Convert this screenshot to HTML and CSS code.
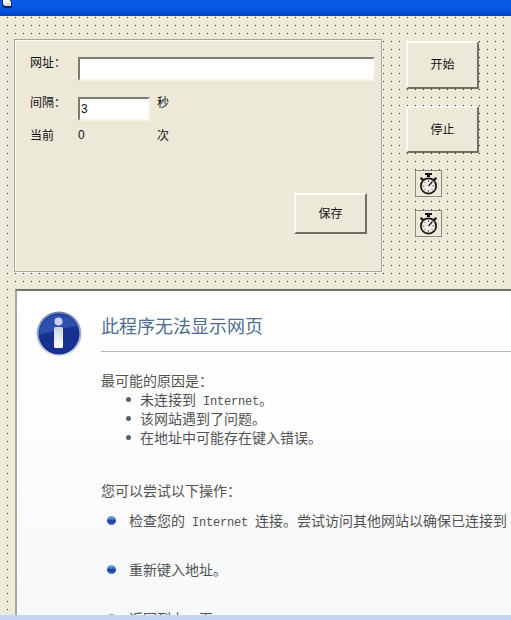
FILE: index.html
```html
<!DOCTYPE html>
<html lang="zh-CN">
<head>
    <meta charset="UTF-8">
    <title>网址刷新</title>
    <link rel="stylesheet" href="styles.css">
</head>
<body>
    <div class="titlebar">
        <svg class="form-icon" width="12" height="8" viewBox="0 0 12 8">
            <path d="M2 0h8l2 2v6H4L2 5z" fill="#14264e"/>
            <path d="M3 0h6.500L11 2v4H5L3 4z" fill="#fff"/>
            <path d="M5 3h6v3H5z" fill="#cfe0f4"/>
        </svg>
    </div>

    <div class="form">
        <div class="top-row">
            <div class="panel">
                <div class="fields">
                    <span class="label">网址：</span>
                    <div class="textbox textbox-url"></div>
                    <span></span>

                    <span class="label">间隔：</span>
                    <div class="textbox textbox-short">3</div>
                    <span class="unit">秒</span>

                    <span class="label last">当前</span>
                    <span class="count last">0</span>
                    <span class="unit last">次</span>
                </div>
                <div class="panel-foot">
                    <button class="btn">保存</button>
                </div>
            </div>

            <div class="side">
                <button class="btn btn-start">开始</button>
                <button class="btn btn-stop">停止</button>
                <div class="timer">
                    <svg width="21" height="22" viewBox="0 0 21 22">
                        <use href="#watch"/>
                    </svg>
                </div>
                <div class="timer">
                    <svg width="21" height="22" viewBox="0 0 21 22">
                        <use href="#watch"/>
                    </svg>
                </div>
            </div>
        </div>

        <div class="browser">
            <div class="error-head">
                <svg class="info-icon" width="46" height="46" viewBox="0 0 46 46">
                    <defs>
                        <linearGradient id="infoRim" x1="0" y1="0" x2="0" y2="1">
                            <stop offset="0" stop-color="#6a7ca8"/>
                            <stop offset="1" stop-color="#dfe4f0"/>
                        </linearGradient>
                        <linearGradient id="infoStem" x1="0" y1="0" x2="0" y2="1">
                            <stop offset="0" stop-color="#c9d2e6"/>
                            <stop offset="1" stop-color="#ffffff"/>
                        </linearGradient>
                    </defs>
                    <circle cx="23" cy="23" r="22.500" fill="url(#infoRim)"/>
                    <circle cx="23" cy="23" r="20.500" fill="#17328e"/>
                    <path d="M3 24a20 20 0 0 1 38-9C30 17 14 21 3 24z" fill="#2c4fb0"/>
                    <circle cx="22.500" cy="10.500" r="4" fill="#c8d2e8"/>
                    <rect x="18" y="16" width="9" height="21" rx="1.500" fill="url(#infoStem)"/>
                </svg>
                <div class="error-title">
                    <h1>此程序无法显示网页</h1>
                </div>
            </div>

            <p class="reason-title">最可能的原因是：</p>
            <ul class="reasons">
                <li>未连接到<span class="latin"> Internet</span>。</li>
                <li>该网站遇到了问题。</li>
                <li>在地址中可能存在键入错误。</li>
            </ul>

            <p class="try-title">您可以尝试以下操作：</p>
            <div class="action action-first"><i class="orb"></i><span>检查您的<span class="latin"> Internet </span>连接。尝试访问其他网站以确保已连接到 Internet。</span></div>
            <div class="action"><i class="orb"></i><span>重新键入地址。</span></div>
            <div class="action"><i class="orb"></i><span>返回到上一页。</span></div>
        </div>
    </div>
    <div class="status-strip"></div>

    <svg class="defs" width="0" height="0">
        <symbol id="watch" viewBox="0 0 21 22">
            <path d="M7 0h7v2h-2v2H9V2H7z" fill="#111"/>
            <path d="M3 4l3 2-1 2-3-2zM18 4l-3 2 1 2 3-2z" fill="#111"/>
            <circle cx="10.500" cy="13" r="8.500" fill="#111"/>
            <circle cx="10.500" cy="13" r="6.800" fill="#f4f2e8"/>
            <path d="M10.500 13l4-4.500" stroke="#111" stroke-width="1.200"/>
            <path d="M10.500 7v2M10.500 17v2M4.500 13h2M14.500 13h2M6.500 9l1 1M6.500 17l1-1M14.500 17l-1-1" stroke="#666" stroke-width="1"/>
        </symbol>
    </svg>
</body>
</html>
```

FILE: styles.css
```css
html, body {
    margin: 0;
    padding: 0;
}

body {
    width: 511px;
    height: 620px;
    overflow: hidden;
    background: #ece9d8;
    font-family: "Noto Sans CJK SC", "Liberation Sans", sans-serif;
    font-size: 12px;
    color: #111;
}

.defs {
    position: absolute;
}

.titlebar {
    height: 16px;
    background: linear-gradient(180deg, #0a5ae6 0%, #0458e0 55%, #0340c4 100%);
    overflow: hidden;
}

.form-icon {
    display: block;
}

.form {
    height: 599px;
    box-sizing: border-box;
    padding: 23px 0 0 14px;
    overflow: hidden;
    background-color: #ece9d8;
    background-image: radial-gradient(circle at 0.5px 0.5px, #2c2c28 0.5px, transparent 0.75px);
    background-size: 8px 8px;
    background-position: 7px 1px;
}

.top-row {
    display: flex;
    align-items: flex-start;
}

.panel {
    width: 366px;
    height: 231px;
    background: #ece9d8;
    border: 1px solid #a8a694;
    box-shadow: inset 1px 1px 0 #fbfaf4, 1px 1px 0 #fbfaf4;
}

.fields {
    display: grid;
    grid-template-columns: 48px 79px 1fr;
    grid-template-rows: 24px 24px 14px;
    row-gap: 16px;
    padding: 17px 0 0 15px;
    align-items: start;
}

.label,
.unit {
    line-height: 14px;
    margin-top: -2px;
}

.fields .last {
    line-height: 14px;
    margin-top: -9px;
}

.textbox {
    box-sizing: border-box;
    height: 24px;
    background: #fff;
    border-style: solid;
    border-width: 2px;
    border-color: #7e7c6f #f6f4ea #f6f4ea #7e7c6f;
    padding-left: 1px;
    line-height: 20px;
    font-size: 12px;
    font-family: "Liberation Sans", sans-serif;
}

.textbox-url {
    width: 297px;
}

.textbox-short {
    width: 72px;
}

.count {
    font-family: "Liberation Sans", sans-serif;
}

.panel-foot {
    display: flex;
    justify-content: flex-end;
    padding: 42px 14px 0 0;
}

.btn {
    box-sizing: border-box;
    width: 73px;
    height: 41px;
    padding: 0 0 3px;
    background: #ece9d8;
    border-style: solid;
    border-width: 2px;
    border-color: #fbfaf2 #716f64 #716f64 #fbfaf2;
    font-family: inherit;
    font-size: 12px;
    color: #111;
}

.side {
    display: flex;
    flex-direction: column;
    margin: 2px 0 0 24px;
}

.btn-start {
    height: 48px;
}

.btn-stop {
    height: 47px;
    margin-top: 17px;
}

.timer {
    box-sizing: border-box;
    width: 27px;
    height: 27px;
    margin: 17px 0 0 9px;
    display: flex;
    align-items: center;
    justify-content: center;
    background: #ece9d8;
    border: 1px solid #8c8a7c;
}

.timer + .timer {
    margin-top: 13px;
}

.browser {
    box-sizing: border-box;
    width: 496px;
    height: 327px;
    margin: 17px 0 0 1px;
    padding: 20px 0 0 19px;
    border-top: 2px solid #75736a;
    border-left: 2px solid #a8a694;
    background: linear-gradient(180deg, #ffffff 0%, #fcfcfd 55%, #f7f8fa 100%);
    color: #525252;
    font-size: 14px;
    line-height: 19px;
    white-space: nowrap;
    overflow: hidden;
}

.error-head {
    display: flex;
    align-items: flex-start;
}

.info-icon {
    flex: none;
}

.error-title {
    flex: 1;
    margin-left: 19px;
    padding: 2px 0 13px;
    border-bottom: 1px solid #b8b8b8;
    height: 25px;
}

h1 {
    margin: 0;
    font-size: 18px;
    font-weight: normal;
    line-height: 25px;
    color: #4e6d90;
}

.reason-title,
.try-title {
    margin: 0 0 0 65px;
}

.reason-title {
    margin-top: 14px;
}

.reasons {
    margin: 0 0 0 65px;
    padding: 0 0 0 39px;
    list-style: none;
}

.reasons li {
    position: relative;
    height: 19px;
}

.reasons li::before {
    content: "";
    position: absolute;
    left: -14px;
    top: 7px;
    width: 5px;
    height: 5px;
    border-radius: 50%;
    background: #5a6068;
}

.latin {
    font-family: "Liberation Mono", monospace;
    font-size: 12px;
    letter-spacing: -0.2px;
    line-height: 1;
    white-space: pre;
}

.try-title {
    margin-top: 34px;
}

.action {
    display: flex;
    align-items: center;
    margin: 30px 0 0 71px;
    height: 19px;
}

.action-first {
    margin-top: 11px;
}

.orb {
    flex: none;
    width: 9px;
    height: 9px;
    margin-right: 13px;
    border-radius: 50%;
    background: linear-gradient(180deg, #7fa4e2 0%, #4a78cc 35%, #123a96 55%, #3f72cc 100%);
}

.status-strip {
    height: 5px;
    background: #c6d6f2;
    position: absolute;
    left: 0;
    right: 0;
    top: 615px;
}
```
